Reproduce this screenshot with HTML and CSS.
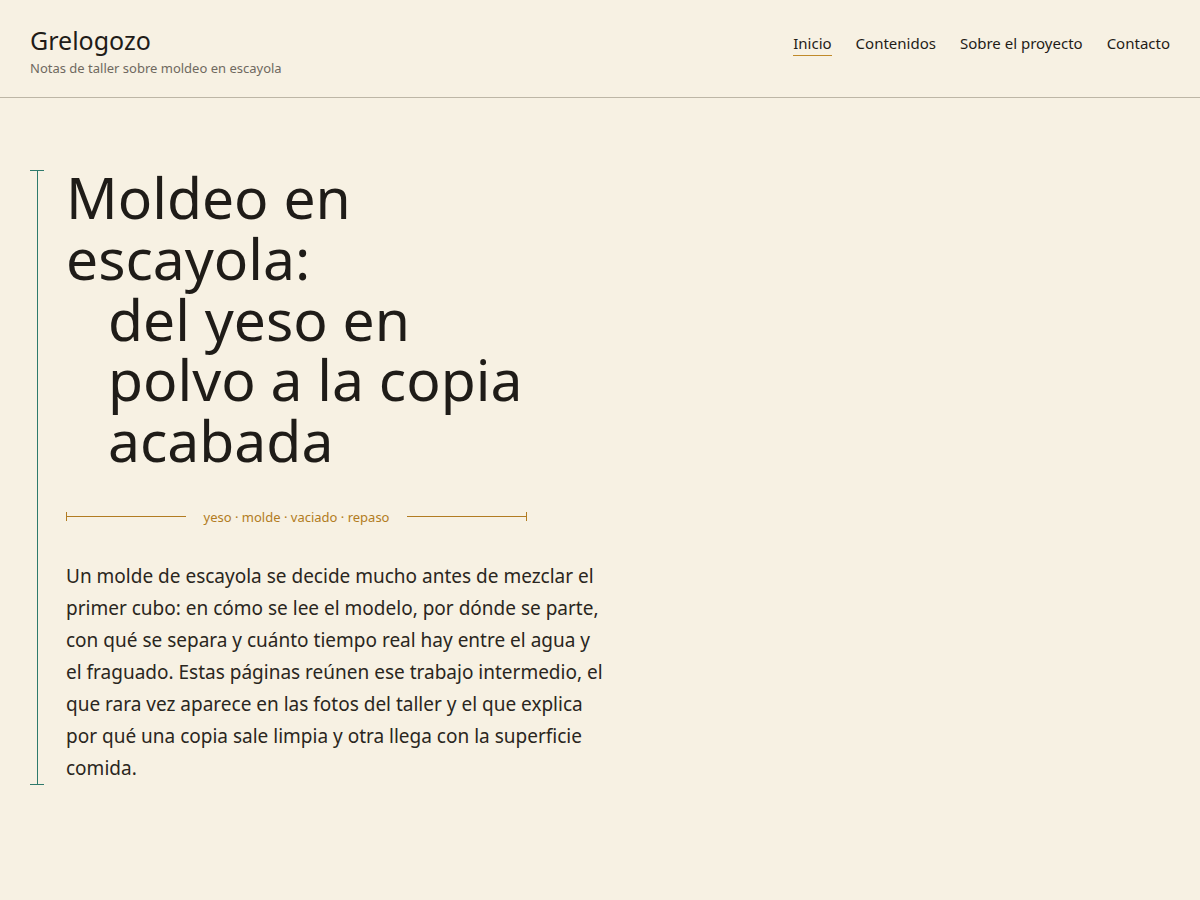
FILE: index.html
```html
<!DOCTYPE html>
<html lang="es">
<head>
<meta charset="utf-8">
<title>Grelogozo</title>
<link rel="stylesheet" href="styles.css">
</head>
<body>
<header class="site-header">
  <div class="brand">
    <div class="brand-title">Grelogozo</div>
    <div class="brand-tag">Notas de taller sobre moldeo en escayola</div>
  </div>
  <nav class="nav">
    <a class="nav-link is-active" href="#">Inicio</a>
    <a class="nav-link" href="#">Contenidos</a>
    <a class="nav-link" href="#">Sobre el proyecto</a>
    <a class="nav-link" href="#">Contacto</a>
  </nav>
</header>
<main class="main">
  <article class="hero">
    <h1 class="hero-title">Moldeo en escayola:<span class="hero-sub">del yeso en polvo a la copia acabada</span></h1>
    <div class="divider">
      <span class="divider-line divider-line-left"></span>
      <span class="divider-text">yeso · molde · vaciado · repaso</span>
      <span class="divider-line divider-line-right"></span>
    </div>
    <p class="hero-text">Un molde de escayola se decide mucho antes de mezclar el primer cubo: en cómo se lee el modelo, por dónde se parte, con qué se separa y cuánto tiempo real hay entre el agua y el fraguado. Estas páginas reúnen ese trabajo intermedio, el que rara vez aparece en las fotos del taller y el que explica por qué una copia sale limpia y otra llega con la superficie comida.</p>
  </article>
</main>
</body>
</html>
```
FILE: styles.css
```css
* { box-sizing: border-box; }
html, body { margin: 0; padding: 0; }
body {
  background: #f7f1e3;
  color: #1f1c18;
  font-family: "Noto Sans", "DejaVu Sans", sans-serif;
  min-height: 900px;
}
.site-header {
  display: flex;
  justify-content: space-between;
  align-items: flex-start;
  padding: 24px 30px 20px;
  border-bottom: 1px solid #bdb6a6;
  height: 98px;
}
.brand-title {
  font-size: 25px;
  line-height: 32px;
  color: #1f1c18;
}
.brand-tag {
  font-size: 13px;
  line-height: 18px;
  margin-top: 3px;
  color: #6f695f;
}
.nav {
  display: flex;
  gap: 24px;
  padding-top: 8px;
}
.nav-link {
  font-size: 15px;
  line-height: 22px;
  color: #1f1c18;
  text-decoration: none;
  padding-bottom: 1px;
  border-bottom: 1px solid transparent;
}
.nav-link.is-active {
  border-bottom-color: #c08a2a;
}
.main {
  padding: 72px 30px 40px;
}
.hero {
  display: flow-root;
  position: relative;
  margin-left: 7px;
  border-left: 1px solid #2f7a6c;
  padding-left: 28px;
  max-width: 580px;
}
.hero::before,
.hero::after {
  content: "";
  position: absolute;
  left: -8px;
  width: 14px;
  height: 1px;
  background: #2f7a6c;
}
.hero::before { top: 0; }
.hero::after { bottom: 0; }
.hero-title {
  margin: -3px 0 0;
  font-weight: 400;
  font-size: 57px;
  line-height: 60.75px;
  max-width: 480px;
  color: #1f1c18;
}
.hero-sub {
  display: block;
  padding-left: 42px;
}
.divider {
  display: flex;
  align-items: center;
  gap: 18px;
  width: 461px;
  margin-top: 37px;
}
.divider-line {
  flex: 1;
  height: 1px;
  background: #b27c22;
  position: relative;
}
.divider-line-left::before,
.divider-line-right::after {
  content: "";
  position: absolute;
  top: -4px;
  width: 1px;
  height: 9px;
  background: #b27c22;
}
.divider-line-left::before { left: 0; }
.divider-line-right::after { right: 0; }
.divider-text {
  font-size: 13px;
  line-height: 18px;
  color: #b27c22;
}
.hero-text {
  margin: 34px 0 0;
  padding-bottom: 1px;
  font-size: 19px;
  line-height: 32px;
  color: #2a2620;
  max-width: 540px;
}
```
